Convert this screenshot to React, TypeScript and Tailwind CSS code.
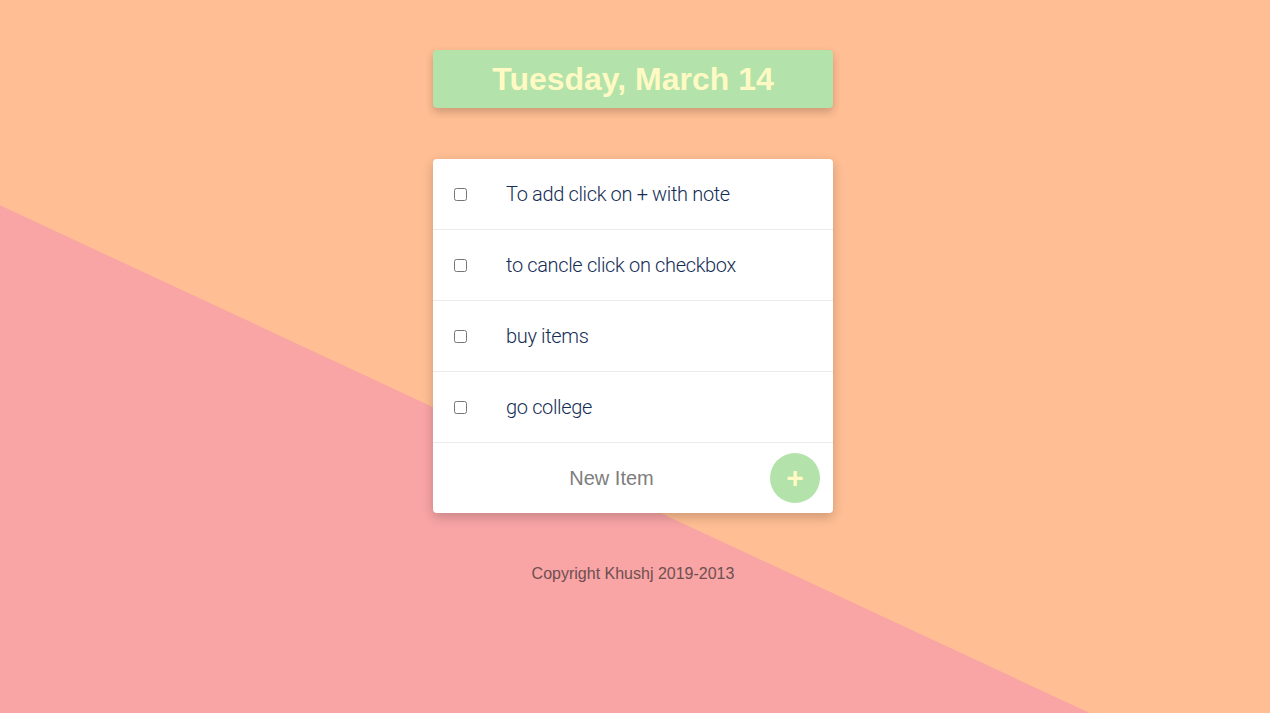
import React from "react";

const items = [
  "To add click on + with note",
  "to cancle click on checkbox",
  "buy items",
  "go college",
];

export default function App() {
  return (
    <div
      className="relative min-h-[713px] w-full overflow-hidden bg-[#ffbe93]"
      style={{ fontFamily: '"Liberation Sans", Arial, sans-serif' }}
    >
      <div className="absolute inset-0 bg-[#f9a4a5] [clip-path:polygon(0_28.8%,85.8%_100%,0_100%)]" />
      <div className="relative flex flex-col items-center pr-[4px] pt-[50px]">
        <div className="flex h-[58px] w-[400px] items-center justify-center rounded-[4px] bg-[#b3e2aa] shadow-[0_4px_8px_rgba(0,0,0,0.2)]">
          <h1 className="text-[32px] font-bold text-[#fffac4]">Tuesday, March 14</h1>
        </div>
        <div className="mt-[51px] w-[400px] rounded-[4px] bg-white shadow-[0_4px_12px_rgba(0,0,0,0.2)]">
          {items.map((t) => (
            <div
              key={t}
              className="flex h-[71px] items-center border-b border-[#ebebeb]"
            >
              <input
                type="checkbox"
                className="ml-[21px] h-[13px] w-[13px]"
              />
              <span
                className="ml-[39px] text-[20px] font-light tracking-[-0.35px] text-[#132d55]"
                style={{ fontFamily: 'Roboto, "Liberation Sans", sans-serif' }}
              >
                {t}
              </span>
            </div>
          ))}
          <div className="flex h-[70px] items-center pr-[13px]">
            <input
              placeholder="New Item"
              className="ml-[20px] h-full min-w-0 flex-1 bg-transparent text-center text-[20px] text-[#7d7d7d] outline-none placeholder:text-[#7d7d7d]"
            />
            <button className="flex h-[50px] w-[50px] items-center justify-center rounded-full bg-[#b3e2aa] text-[30px] font-bold leading-none text-[#fffac4]">
              +
            </button>
          </div>
        </div>
        <p className="mt-[49px] text-[16px] text-[#6e5050]">Copyright Khushj 2019-2013</p>
      </div>
    </div>
  );
}
